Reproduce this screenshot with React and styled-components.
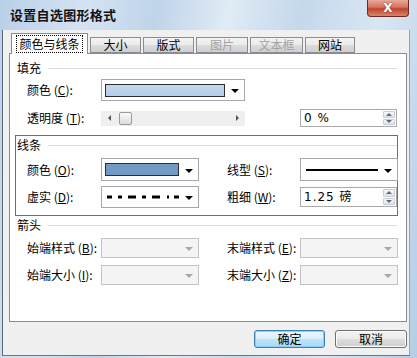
import React from "react";
import styled, { createGlobalStyle } from "styled-components";

const GlobalStyle = createGlobalStyle`
  html, body {
    margin: 0;
    padding: 0;
  }
  body {
    width: 417px;
    height: 358px;
    overflow: hidden;
    font-family: "Noto Sans CJK SC", "Liberation Sans", sans-serif;
    font-size: 12px;
    color: #000;
  }
`;

const Window = styled.div`
  width: 417px;
  height: 358px;
  display: flex;
  flex-direction: column;
  background: linear-gradient(
    100deg,
    #b9d0e8 0%,
    #d4e3f2 18%,
    #bfd4ea 33%,
    #e0ebf5 48%,
    #c4d8ec 63%,
    #d9e6f3 80%,
    #b5cde6 100%
  );
`;

const TitleBar = styled.div`
  height: 30px;
  display: flex;
  justify-content: space-between;
  align-items: flex-start;
  flex-shrink: 0;
`;

const Title = styled.div`
  padding-left: 10px;
  line-height: 30px;
  font-size: 13px;
  font-weight: bold;
  color: #111;
  letter-spacing: 0.3px;
`;

const CloseButton = styled.div`
  width: 42px;
  height: 17px;
  margin-right: 8px;
  box-sizing: border-box;
  border: 1px solid #6b2a25;
  border-top: none;
  border-radius: 0 0 4px 4px;
  background: linear-gradient(#e9a99c 0%, #d3735f 45%, #c0442e 55%, #d8866a 100%);
  display: flex;
  align-items: center;
  justify-content: center;
  color: #fff;
  font-family: "DejaVu Sans", sans-serif;
  font-weight: bold;
  font-size: 12px;
  text-shadow: 0 0 2px #7a2a20;
`;

const Client = styled.div`
  height: 326px;
  margin: 0 7px 0 2px;
  box-sizing: border-box;
  border-left: 1px solid #5b6773;
  border-right: 1px solid #8fa6ba;
  border-bottom: 1px solid #3d8d99;
  background: #f0f0f0;
  padding: 3px 2px 0 6px;
  display: flex;
  flex-direction: column;
`;

const TabRow = styled.div`
  height: 20px;
  display: flex;
  align-items: flex-end;
  gap: 2px;
  padding-left: 2px;
  position: relative;
  z-index: 1;
`;

const Tab = styled.div`
  width: ${p => p.$w}px;
  height: ${p => (p.$active ? 21 : 16)}px;
  margin-bottom: ${p => (p.$active ? -1 : 0)}px;
  box-sizing: border-box;
  border: 1px solid #898c95;
  border-bottom: ${p => (p.$active ? "none" : "1px solid #898c95")};
  background: ${p =>
    p.$active ? "#fff" : "linear-gradient(#f3f3f3 0%, #ebebeb 50%, #dcdcdc 51%, #cfcfcf 100%)"};
  color: ${p => (p.$disabled ? "#a3a3a3" : "#000")};
  display: flex;
  align-items: center;
  justify-content: center;
  font-size: 12px;
  line-height: 14px;
`;

const FocusText = styled.span`
  outline: 1px dotted #000;
  outline-offset: 1px;
  padding: 0 1px;
`;

const Panel = styled.div`
  height: 269px;
  box-sizing: border-box;
  border: 1px solid #898c95;
  background: #fff;
  padding-top: 5px;
`;

const Section = styled.div`
  margin: ${p => p.$top || 0}px 8px 0 5px;
  border: 1px solid ${p => (p.$marked ? "#c24a52" : "transparent")};
  padding: 0 0 ${p => p.$bottom || 0}px 1px;
`;

const SectionHead = styled.div`
  height: 16px;
  margin-top: ${p => p.$top || 0}px;
  display: flex;
  align-items: center;
  gap: 7px;
  line-height: 16px;
`;

const HeadLine = styled.div`
  flex: 1;
  height: 1px;
  background: #d5dfe5;
`;

const Row = styled.div`
  display: grid;
  grid-template-columns: 74px 98px 28px 73px 98px;
  align-items: center;
  padding-left: 10px;
  height: ${p => p.$h}px;
  margin-top: ${p => p.$top}px;
`;

const Label = styled.div`
  white-space: nowrap;
  line-height: 16px;
  color: ${p => (p.$dim ? "#222" : "#000")};
  grid-column: ${p => p.$col};
`;

const Combo = styled.div`
  grid-column: ${p => p.$col};
  width: ${p => p.$w || 98}px;
  height: 100%;
  box-sizing: border-box;
  border: 1px solid ${p => (p.$disabled ? "#c3c3c3" : "#a4a8ae")};
  background: ${p => (p.$disabled ? "#f4f4f4" : "#fff")};
  display: flex;
  align-items: center;
  padding: 0 5px 0 3px;
  gap: 6px;
`;

const ComboValue = styled.div`
  flex: 1;
  height: 100%;
  display: flex;
  align-items: center;
`;

const Swatch = styled.div`
  width: 100%;
  height: 13px;
  box-sizing: border-box;
  border: 1px solid #2d2d2d;
  background: ${p => p.$color};
`;

const Arrow = styled.div`
  width: 0;
  height: 0;
  border-left: 4px solid transparent;
  border-right: 4px solid transparent;
  border-top: 4px solid ${p => (p.$disabled ? "#a8a8a8" : "#000")};
  margin-top: 2px;
`;

const Slider = styled.div`
  grid-column: 2 / span 3;
  width: 144px;
  height: 15px;
  background: #efefef;
  display: flex;
  align-items: center;
  padding: 0 6px 0 7px;
  box-sizing: border-box;
`;

const SlideArrow = styled.div`
  width: 0;
  height: 0;
  border-top: 3px solid transparent;
  border-bottom: 3px solid transparent;
  ${p => (p.$right ? "border-left: 3px solid #555;" : "border-right: 3px solid #555;")}
`;

const Thumb = styled.div`
  width: 13px;
  height: 13px;
  margin-left: 8px;
  box-sizing: border-box;
  border: 1px solid #9a9a9a;
  border-radius: 2px;
  background: linear-gradient(#fbfbfb, #dcdcdc);
`;

const SlideGap = styled.div`
  flex: 1;
`;

const Field = styled.div`
  grid-column: 5;
  width: 97px;
  height: ${p => p.$h}px;
  box-sizing: border-box;
  border: 1px solid #a9a9a9;
  background: #fff;
  display: flex;
  align-items: center;
  padding: 0 1px 0 3px;
`;

const FieldText = styled.div`
  flex: 1;
  font-family: "DejaVu Sans", "Noto Sans CJK SC", sans-serif;
  font-size: 12px;
  letter-spacing: 1px;
  line-height: 14px;
`;

const Spinner = styled.div`
  width: 12px;
  height: 100%;
  display: flex;
  flex-direction: column;
  gap: 1px;
  padding: 1px 0;
  box-sizing: border-box;
`;

const SpinPart = styled.div`
  flex: 1;
  border: 1px solid #c9ced6;
  border-radius: 1px;
  background: linear-gradient(#f6f7f9, #dfe3e9);
  display: flex;
  align-items: center;
  justify-content: center;
  &::after {
    content: "";
    border-left: 3px solid transparent;
    border-right: 3px solid transparent;
    ${p =>
      p.$up ? "border-bottom: 3px solid #5a6b82;" : "border-top: 3px solid #5a6b82;"}
  }
`;

const ButtonRow = styled.div`
  margin-top: 8px;
  display: flex;
  justify-content: flex-end;
  gap: 10px;
`;

const Button = styled.div`
  width: ${p => p.$w}px;
  height: 18px;
  box-sizing: border-box;
  border: 1px solid ${p => (p.$default ? "#3c7fb1" : "#707070")};
  border-radius: 3px;
  background: ${p =>
    p.$default
      ? "linear-gradient(#eaf6fd 0%, #d9f0fc 50%, #bee6fd 51%, #a7d9f5 100%)"
      : "linear-gradient(#f2f2f2 0%, #ebebeb 50%, #dddddd 51%, #cfcfcf 100%)"};
  box-shadow: ${p => (p.$default ? "inset 0 0 0 1px #8ed0f5" : "inset 0 0 0 1px #fcfcfc")};
  display: flex;
  align-items: center;
  justify-content: center;
  font-size: 12px;
  line-height: 14px;
`;

const LineSample = ({ dashed }) => (
  <svg width="100%" height="6" preserveAspectRatio="none">
    <line
      x1="2"
      y1="3"
      x2="80"
      y2="3"
      stroke="#000"
      strokeWidth={dashed ? 3 : 2}
      strokeDasharray={dashed ? "5 6 4 6 8 6 4 6 8 7 2" : undefined}
    />
  </svg>
);

const Mn = ({ k }) => (
  <>
    {" ("}
    <u>{k}</u>
    {"):"}
  </>
);

const tabs = [
  { name: "颜色与线条", w: 77, active: true },
  { name: "大小", w: 51 },
  { name: "版式", w: 51 },
  { name: "图片", w: 52, disabled: true },
  { name: "文本框", w: 53, disabled: true },
  { name: "网站", w: 50 },
];

export default function App() {
  return (
    <>
      <GlobalStyle />
      <Window>
        <TitleBar>
          <Title>设置自选图形格式</Title>
          <CloseButton>X</CloseButton>
        </TitleBar>
        <Client>
          <TabRow>
            {tabs.map(t => (
              <Tab key={t.name} $w={t.w} $active={t.active} $disabled={t.disabled}>
                {t.active ? <FocusText>{t.name}</FocusText> : t.name}
              </Tab>
            ))}
          </TabRow>
          <Panel>
            <Section>
              <SectionHead>
                填充
                <HeadLine />
              </SectionHead>
              <Row $h={22} $top={3}>
                <Label $col={1}>
                  颜色<Mn k="C" />
                </Label>
                <Combo $col="2 / span 3" $w={144}>
                  <ComboValue>
                    <Swatch $color="linear-gradient(#c3d8ee, #b3cde9)" />
                  </ComboValue>
                  <Arrow />
                </Combo>
              </Row>
              <Row $h={20} $top={7}>
                <Label $col={1}>
                  透明度<Mn k="T" />
                </Label>
                <Slider>
                  <SlideArrow />
                  <Thumb />
                  <SlideGap />
                  <SlideArrow $right />
                </Slider>
                <Field $h={18}>
                  <FieldText>0 %</FieldText>
                  <Spinner>
                    <SpinPart $up />
                    <SpinPart />
                  </Spinner>
                </Field>
              </Row>
            </Section>

            <Section $marked $top={6} $bottom={7}>
              <SectionHead $top={1}>
                线条
                <HeadLine />
              </SectionHead>
              <Row $h={23} $top={5}>
                <Label $col={1}>
                  颜色<Mn k="O" />
                </Label>
                <Combo $col={2}>
                  <ComboValue>
                    <Swatch $color="#739ac5" />
                  </ComboValue>
                  <Arrow />
                </Combo>
                <Label $col={4}>
                  线型<Mn k="S" />
                </Label>
                <Combo $col={5}>
                  <ComboValue>
                    <LineSample />
                  </ComboValue>
                  <Arrow />
                </Combo>
              </Row>
              <Row $h={22} $top={5}>
                <Label $col={1}>
                  虚实<Mn k="D" />
                </Label>
                <Combo $col={2}>
                  <ComboValue>
                    <LineSample dashed />
                  </ComboValue>
                  <Arrow />
                </Combo>
                <Label $col={4}>
                  粗细<Mn k="W" />
                </Label>
                <Field $h={20}>
                  <FieldText>1.25 磅</FieldText>
                  <Spinner>
                    <SpinPart $up />
                    <SpinPart />
                  </Spinner>
                </Field>
              </Row>
            </Section>

            <Section>
              <SectionHead>
                箭头
                <HeadLine />
              </SectionHead>
              <Row $h={20} $top={5}>
                <Label $col={1}>
                  始端样式<Mn k="B" />
                </Label>
                <Combo $col={2} $disabled>
                  <ComboValue />
                  <Arrow $disabled />
                </Combo>
                <Label $col={4}>
                  末端样式<Mn k="E" />
                </Label>
                <Combo $col={5} $disabled>
                  <ComboValue />
                  <Arrow $disabled />
                </Combo>
              </Row>
              <Row $h={20} $top={7}>
                <Label $col={1}>
                  始端大小<Mn k="I" />
                </Label>
                <Combo $col={2} $disabled>
                  <ComboValue />
                  <Arrow $disabled />
                </Combo>
                <Label $col={4}>
                  末端大小<Mn k="Z" />
                </Label>
                <Combo $col={5} $disabled>
                  <ComboValue />
                  <Arrow $disabled />
                </Combo>
              </Row>
            </Section>
          </Panel>
          <ButtonRow>
            <Button $w={71} $default>
              确定
            </Button>
            <Button $w={72}>取消</Button>
          </ButtonRow>
        </Client>
      </Window>
    </>
  );
}
